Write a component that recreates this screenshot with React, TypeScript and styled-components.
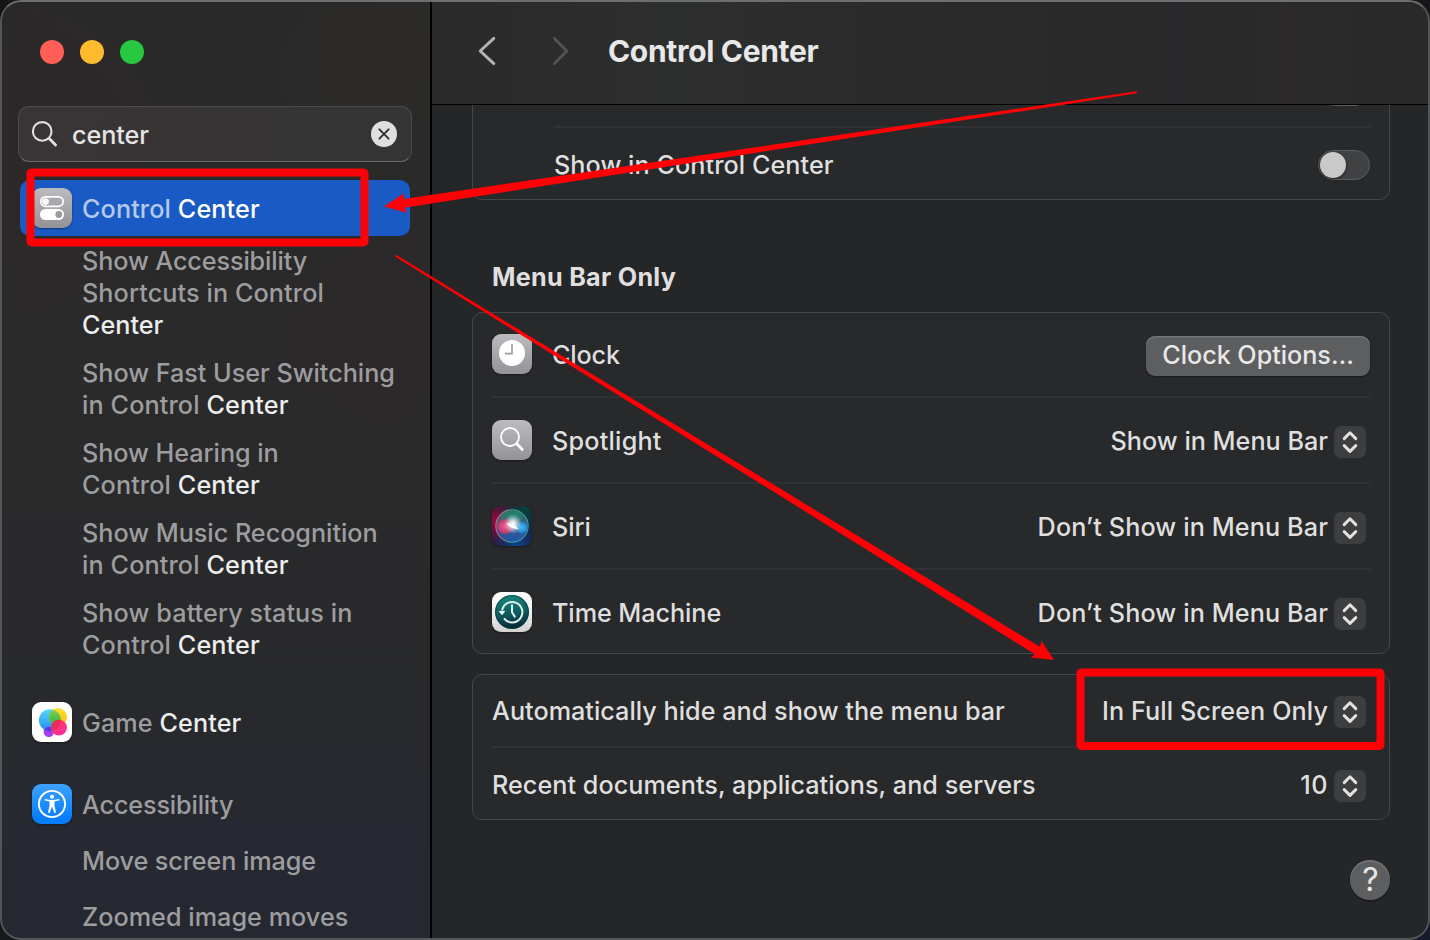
import React from "react";
import styled, { createGlobalStyle } from "styled-components";

const GlobalStyle = createGlobalStyle`
  *, *::before, *::after { box-sizing: border-box; }
  html, body { margin: 0; padding: 0; overflow: hidden; background: #131415; }
  body { font-family: Inter, "Liberation Sans", sans-serif; font-size: 25.2px; font-weight: 450; -webkit-font-smoothing: antialiased; }
  svg { display: block; flex: none; }
`;

/* ---------- window ---------- */

const Desktop = styled.div`
  position: relative;
  width: 1430px;
  height: 940px;
  overflow: hidden;
  background: linear-gradient(160deg, #151515 0%, #17181b 60%, #171a2a 100%);
`;

const Window = styled.div`
  position: relative;
  display: flex;
  width: 1430px;
  height: 940px;
  border-radius: 21px;
  overflow: hidden;
  background: #252628;
  &::after {
    content: "";
    position: absolute;
    inset: 0;
    border: 2px solid #545556;
    border-top-color: #6d6e6f;
    border-radius: 21px;
    pointer-events: none;
  }
`;

const Label = styled.span<{ $track?: number }>`
  letter-spacing: ${(p) => p.$track ?? 0.08}px;
  white-space: pre;
`;

/* ---------- sidebar ---------- */

const Sidebar = styled.aside`
  display: flex;
  flex-direction: column;
  flex: none;
  width: 432px;
  border-right: 2px solid #000;
  overflow: hidden;
  color: #9d9d9f;
  background:
    radial-gradient(circle at 100% 6%, rgba(46, 43, 38, 0.8), transparent 190px),
    radial-gradient(circle at 90% 36%, rgba(50, 38, 38, 0.45), transparent 150px),
    radial-gradient(circle at 0% 17%, rgba(50, 38, 38, 0.5), transparent 230px),
    linear-gradient(180deg, #29292a 0%, #2a2a2b 40%, #28292b 72%, #262932 90%, #262831 100%);
`;

const TrafficLights = styled.div`
  display: flex;
  gap: 16px;
  padding: 40px 0 0 40px;
  height: 106px;
  flex: none;
`;

const Light = styled.i<{ $color: string }>`
  width: 24px;
  height: 24px;
  border-radius: 50%;
  background: ${(p) => p.$color};
`;

const SearchField = styled.div`
  display: flex;
  align-items: center;
  flex: none;
  height: 56px;
  margin: 0 18px;
  padding: 0 14px 0 12px;
  border: 1px solid #4c4a4b;
  border-bottom: 1.5px solid #68676a;
  border-radius: 11px;
  background: linear-gradient(100deg, #3a3435 0%, #373435 50%, #333435 100%);
  color: #e4e4e4;
`;

const SearchText = styled.div`
  flex: 1;
  padding: 2px 0 0 13px;
  line-height: 32px;
`;

const Entry = styled.div<{ $selected?: boolean }>`
  display: flex;
  align-items: center;
  flex: none;
  gap: 10px;
  height: 56px;
  margin: 0 20px;
  padding-left: 12px;
  border-radius: 10px;
  background: ${(p) => (p.$selected ? "#195ac4" : "transparent")};
  color: ${(p) => (p.$selected ? "#b4c9ec" : "inherit")};
`;

const EntryText = styled.div`
  padding-top: 2px;
  line-height: 32px;
`;

const Results = styled.div`
  display: flex;
  flex-direction: column;
  flex: none;
  gap: 26px;
  padding-top: 18px;
`;

const SubList = styled.div`
  display: flex;
  flex-direction: column;
  gap: 16px;
  padding: 9px 0 7px 82px;
`;

const SubItem = styled.div`
  display: flex;
  flex-direction: column;
  line-height: 32px;
`;

const SubRow = styled.div`
  height: 56px;
  padding: 13px 0 0 82px;
  line-height: 32px;
`;

const Match = styled.b<{ $selected?: boolean }>`
  font-weight: inherit;
  color: ${(p) => (p.$selected ? "#ffffff" : "#ededed")};
`;

/* ---------- content pane ---------- */

const Pane = styled.main`
  display: flex;
  flex-direction: column;
  flex: 1;
  min-width: 0;
  color: #dfdfdf;
`;

const Header = styled.header`
  display: flex;
  align-items: center;
  flex: none;
  height: 105px;
  padding: 0 0 2px 45px;
  border-bottom: 1px solid #000;
  background: linear-gradient(90deg, #2a2a2b 0%, #2d2e2e 25%, #2a2a2b 50%, #29282a 75%, #2b2a29 85%, #2a2929 100%);
`;

const Title = styled.h1`
  margin: 0 0 0 37px;
  font-size: 30px;
  font-weight: 700;
  line-height: 36px;
  letter-spacing: -0.32px;
  color: #e8e8e8;
`;

const NavIcon = styled.span<{ $gap?: number }>`
  margin-left: ${(p) => p.$gap ?? 0}px;
`;

const Scroll = styled.div`
  display: flex;
  flex-direction: column;
  flex: 1;
  min-height: 0;
  padding: 0 40px;
  overflow: hidden;
`;

const Card = styled.section<{ $clipped?: boolean }>`
  flex: none;
  margin-top: ${(p) => (p.$clipped ? "-53px" : "0")};
  padding: 0 19px;
  border: 1px solid #454648;
  border-radius: 10px;
  background: #28292b;
`;

const CardStack = styled.div`
  display: flex;
  flex-direction: column;
  gap: 20px;
`;

const SectionTitle = styled.h2`
  margin: 0;
  height: 112px;
  padding: 61px 0 0 20px;
  font-size: 25.2px;
  font-weight: 700;
  line-height: 32px;
  letter-spacing: 0.27px;
`;

const Row = styled.div<{ $height: number; $indent?: number; $drop?: number; $lift?: number }>`
  display: flex;
  align-items: center;
  height: ${(p) => p.$height}px;
  margin-left: ${(p) => p.$indent ?? 0}px;
  padding-top: ${(p) => p.$drop ?? 0}px;
  padding-bottom: ${(p) => p.$lift ?? 0}px;
`;

const Divider = styled.hr<{ $indent?: number }>`
  height: 2px;
  margin: 0 0 0 ${(p) => p.$indent ?? 0}px;
  border: 0;
  background: #313235;
`;

const RowText = styled.div<{ $gap?: number; $drop?: number }>`
  flex: 1;
  padding: ${(p) => p.$drop ?? 2}px 0 0 ${(p) => p.$gap ?? 0}px;
  line-height: 32px;
`;

const Value = styled.div`
  padding-top: 2px;
  line-height: 32px;
`;

const StepperBox = styled.span`
  display: flex;
  align-items: center;
  justify-content: center;
  width: 32px;
  height: 32px;
  margin: 4px 4px 0 6px;
  border-radius: 7px;
  background: #3d3e40;
`;

const PushButton = styled.button`
  width: 224px;
  height: 40px;
  margin-top: 4px;
  padding: 0 0 2px;
  border: 0;
  border-radius: 9px;
  background: #5d5e60;
  box-shadow: inset 0 1.5px 0 #737476, 0 1px 2px rgba(0, 0, 0, 0.45);
  font: inherit;
  color: #e8e8e8;
`;

const Switch = styled.span`
  display: flex;
  align-items: center;
  width: 52px;
  height: 30px;
  padding-left: 1px;
  border: 1px solid #5b5c5e;
  border-radius: 15px;
  background: #404143;
  &::before {
    content: "";
    width: 26px;
    height: 26px;
    border-radius: 50%;
    background: #c9c9c9;
    box-shadow: 0 1px 3px rgba(0, 0, 0, 0.5);
  }
`;

const Footer = styled.footer`
  display: flex;
  justify-content: flex-end;
  padding-top: 40px;
`;

const HelpButton = styled.button`
  width: 40px;
  height: 40px;
  padding: 0 0 0 1px;
  border: 0;
  border-radius: 50%;
  background: #5d5e60;
  box-shadow: inset 0 1.5px 1px #77787a, 0 1px 2px rgba(0, 0, 0, 0.45);
  font: 400 32px/40px Inter, sans-serif;
  color: #e6e6e6;
`;

/* ---------- icons ---------- */

const Tile = styled.span<{ $fill: string }>`
  display: flex;
  flex: none;
  width: 40px;
  height: 40px;
  border-radius: 9px;
  overflow: hidden;
  background: ${(p) => p.$fill};
  box-shadow: 0 1px 2px rgba(0, 0, 0, 0.4);
`;

const GREY = "linear-gradient(180deg, #bcbbc0 0%, #939297 100%)";

const ControlCenterIcon = () => (
  <Tile $fill={GREY}>
    <svg width="40" height="40" viewBox="0 0 40 40">
      <rect x="8.8" y="8.8" width="22.4" height="9.6" rx="4.8" fill="#a9a8ac" stroke="#fff" strokeWidth="1.7" />
      <circle cx="13.6" cy="13.6" r="3.3" fill="#fff" />
      <rect x="8" y="21" width="24" height="11" rx="5.5" fill="#fff" />
      <circle cx="26.8" cy="26.5" r="3.4" fill="#9c9b9f" />
    </svg>
  </Tile>
);

const ClockIcon = () => (
  <Tile $fill={GREY}>
    <svg width="40" height="40" viewBox="0 0 40 40">
      <circle cx="20" cy="19" r="13" fill="#fff" />
      <path d="M20 10.3V19.6H13" fill="none" stroke="#9d9ca1" strokeWidth="1.7" />
    </svg>
  </Tile>
);

const SpotlightIcon = () => (
  <Tile $fill={GREY}>
    <svg width="40" height="40" viewBox="0 0 40 40" fill="none" stroke="#fff" strokeLinecap="round">
      <circle cx="18" cy="17" r="9" strokeWidth="1.8" />
      <path d="M24.8 23.8L30.3 29.5" strokeWidth="2.8" />
    </svg>
  </Tile>
);

const SiriIcon = () => (
  <Tile $fill="#201c3c">
    <svg width="40" height="40" viewBox="0 0 40 40">
      <defs>
        <radialGradient id="siriRed" cx="0" cy="0.35" r="0.75"><stop offset="0" stopColor="#960a40" /><stop offset="1" stopColor="#720b3a" stopOpacity="0" /></radialGradient>
        <radialGradient id="siriGreen" cx="0.85" cy="0.05" r="0.7"><stop offset="0" stopColor="#06443a" /><stop offset="1" stopColor="#06443a" stopOpacity="0" /></radialGradient>
        <radialGradient id="siriBlue" cx="0.6" cy="1" r="0.65"><stop offset="0" stopColor="#0b4592" /><stop offset="1" stopColor="#0a3d7a" stopOpacity="0" /></radialGradient>
        <linearGradient id="siriOrb" x1="0" y1="0" x2="0" y2="1"><stop offset="0" stopColor="#1d7d66" /><stop offset="0.5" stopColor="#4f6292" /><stop offset="1" stopColor="#1d5dbc" /></linearGradient>
        <linearGradient id="siriRing" x1="0" y1="0.4" x2="1" y2="0.5"><stop offset="0" stopColor="#e0587c" /><stop offset="0.5" stopColor="#4ea88e" /><stop offset="1" stopColor="#3496ad" /></linearGradient>
        <radialGradient id="siriPink"><stop offset="0" stopColor="#f35c98" /><stop offset="0.75" stopColor="#d83a6c" stopOpacity="0.85" /><stop offset="1" stopColor="#c12c6a" stopOpacity="0" /></radialGradient>
        <radialGradient id="siriCyan"><stop offset="0" stopColor="#43bdf5" /><stop offset="0.7" stopColor="#269be0" stopOpacity="0.75" /><stop offset="1" stopColor="#1d7ccc" stopOpacity="0" /></radialGradient>
        <radialGradient id="siriGlow"><stop offset="0" stopColor="#fff" /><stop offset="0.3" stopColor="#fff" stopOpacity="0.8" /><stop offset="1" stopColor="#cfeaff" stopOpacity="0" /></radialGradient>
      </defs>
      <rect width="40" height="40" fill="url(#siriRed)" />
      <rect width="40" height="40" fill="url(#siriGreen)" />
      <rect width="40" height="40" fill="url(#siriBlue)" />
      <circle cx="20" cy="20" r="16" fill="url(#siriOrb)" fillOpacity="0.8" />
      <ellipse cx="20" cy="11" rx="11" ry="6" fill="#239877" fillOpacity="0.4" />
      <circle cx="13" cy="20.5" r="8.5" fill="url(#siriPink)" />
      <circle cx="29.8" cy="21.5" r="6.8" fill="url(#siriCyan)" />
      <circle cx="20" cy="20" r="16.2" fill="none" stroke="url(#siriRing)" strokeWidth="1.1" />
      <ellipse cx="21" cy="18" rx="9" ry="10" fill="url(#siriGlow)" />
      <path d="M14.5 17.5Q21 16.5 26.5 23Q18.5 22.8 14.5 17.5Z" fill="#fff" />
    </svg>
  </Tile>
);

const TimeMachineIcon = () => (
  <Tile $fill="linear-gradient(180deg, #ffffff 0%, #ececec 55%, #d2d2d2 100%)">
    <svg width="40" height="40" viewBox="0 0 40 40">
      <defs>
        <linearGradient id="tmDial" x1="0.4" y1="0" x2="0.55" y2="1"><stop offset="0" stopColor="#17897c" /><stop offset="0.5" stopColor="#0e5f60" /><stop offset="1" stopColor="#062531" /></linearGradient>
      </defs>
      <circle cx="20" cy="20" r="17" fill="url(#tmDial)" />
      <circle cx="20" cy="20" r="16.3" fill="none" stroke="#0a3c42" strokeOpacity="0.6" strokeWidth="1.2" />
      <path d="M10.1 18.5A10.2 10.2 0 1 1 12 26.3" fill="none" stroke="#dff0ee" strokeWidth="2" />
      <path d="M6.6 19H13.4L10 23.2Z" fill="#eef8f6" />
      <path d="M20 13.2V20.2L22.8 24.6" fill="none" stroke="#e6f3f1" strokeWidth="2" strokeLinecap="round" strokeLinejoin="round" />
    </svg>
  </Tile>
);

const GameCenterIcon = () => (
  <Tile $fill="#ffffff">
    <svg width="40" height="40" viewBox="0 0 40 40">
      <defs>
        <linearGradient id="gcBlue" x1="0" y1="0" x2="0" y2="1"><stop offset="0" stopColor="#4fdcf8" /><stop offset="1" stopColor="#2c82f5" /></linearGradient>
        <linearGradient id="gcYellow" x1="0" y1="0" x2="0" y2="1"><stop offset="0" stopColor="#fbe22d" /><stop offset="1" stopColor="#ffb812" /></linearGradient>
        <linearGradient id="gcRed" x1="0" y1="0" x2="0.6" y2="1"><stop offset="0" stopColor="#ff3b42" /><stop offset="1" stopColor="#fb2fa2" /></linearGradient>
        <linearGradient id="gcGreen" x1="0" y1="0" x2="0" y2="1"><stop offset="0" stopColor="#8bd44c" /><stop offset="1" stopColor="#25b04c" /></linearGradient>
        <clipPath id="gcBlueClip"><circle cx="17.9" cy="18.3" r="11" /></clipPath>
      </defs>
      <circle cx="16.8" cy="29.8" r="5.2" fill="#a63df0" />
      <circle cx="17.9" cy="18.3" r="11" fill="url(#gcBlue)" />
      <path d="M12.2 27.5Q16.8 31 21 28.8V26Q15 23 12.2 27.5Z" fill="#5a3fe0" />
      <circle cx="26" cy="15" r="9" fill="url(#gcYellow)" />
      <circle cx="26" cy="15" r="9" fill="url(#gcGreen)" clipPath="url(#gcBlueClip)" />
      <circle cx="27" cy="25.7" r="7.9" fill="url(#gcRed)" />
      <path d="M19.8 22.6A7.9 7.9 0 0 1 28.4 18A11 11 0 0 1 21 28.8A7.9 7.9 0 0 1 19.8 22.6Z" fill="#dc2b50" fillOpacity="0.65" />
    </svg>
  </Tile>
);

const AccessibilityIcon = () => (
  <Tile $fill="linear-gradient(180deg, #3da2fd 0%, #087dfd 85%)">
    <svg width="40" height="40" viewBox="0 0 40 40" fill="none" stroke="#fff">
      <circle cx="20" cy="20" r="13.1" strokeWidth="1.9" />
      <circle cx="20" cy="12.8" r="2" fill="#fff" stroke="none" />
      <path d="M13.4 15.7Q20 17.9 26.6 15.7" strokeWidth="1.5" strokeLinecap="round" />
      <path d="M17.7 16.5H22.3L22.2 21.2L23.8 28.6L22.6 28.9L20.3 22.8H19.7L17.4 28.9L16.2 28.6L17.8 21.2Z" fill="#fff" stroke="#fff" strokeWidth="0.4" strokeLinejoin="round" />
    </svg>
  </Tile>
);

const SearchIcon = () => (
  <svg width="28" height="28" viewBox="0 0 28 28" fill="none" stroke="#e0e0e0" strokeLinecap="round">
    <circle cx="11.2" cy="11.4" r="9.3" strokeWidth="2.1" />
    <path d="M18.2 18.5L24.6 25" strokeWidth="2.8" />
  </svg>
);

const ClearIcon = () => (
  <svg width="26" height="26" viewBox="0 0 26 26">
    <circle cx="13" cy="13" r="13" fill="#e0e0e0" />
    <path d="M8.4 8.4L17.6 17.6M17.6 8.4L8.4 17.6" stroke="#363435" strokeWidth="2" strokeLinecap="round" />
  </svg>
);

const Chevron = ({ forward }: { forward?: boolean }) => (
  <svg width="20" height="32" viewBox="0 0 20 32" fill="none" strokeWidth="2.9" strokeLinecap="round" strokeLinejoin="round">
    {forward ? <path d="M3.4 3.4L15.8 16L3.4 28.6" stroke="#525354" /> : <path d="M16.8 3.4L3.2 16L16.8 28.6" stroke="#b4b4b4" />}
  </svg>
);

const Stepper = () => (
  <StepperBox>
    <svg width="32" height="32" viewBox="0 0 32 32" fill="none" stroke="#e2e2e2" strokeWidth="2.9" strokeLinecap="round" strokeLinejoin="round">
      <path d="M10.2 12.6L16 6.8L21.8 12.6M10.2 19.6L16 25.4L21.8 19.6" />
    </svg>
  </StepperBox>
);

/* ---------- annotations over the window ---------- */

const Overlay = styled.svg`
  position: absolute;
  inset: 0;
  pointer-events: none;
`;

const Annotations = () => (
  <Overlay width="1430" height="940" viewBox="0 0 1430 940" fill="#ff0006">
    <rect x="30.5" y="172.5" width="334" height="70" rx="1" fill="none" stroke="#ff0006" strokeWidth="8" strokeLinejoin="round" />
    <rect x="1080.5" y="672.5" width="300" height="73.5" rx="1" fill="none" stroke="#ff0006" strokeWidth="8" strokeLinejoin="round" />
    <path d="M384 206.5L404 193.3L403.3 199L1136.5 91.2L1137 93.2L404.5 207.8L406.8 212.8Z" />
    <path d="M1054 660L1041.5 640.8L1040 646.8L396 254.8L395 256.4L1034.8 654.2L1030.6 657.6Z" />
  </Overlay>
);

/* ---------- data ---------- */

type Line = { text: string; match?: string; track?: number };

const SUB_RESULTS: Line[][] = [
  [{ text: "Show Accessibility", track: -0.1 }, { text: "Shortcuts in Control", track: 0.1 }, { text: "", match: "Center", track: 0 }],
  [{ text: "Show Fast User Switching", track: -0.02 }, { text: "in Control ", match: "Center", track: 0.12 }],
  [{ text: "Show Hearing in", track: -0.04 }, { text: "Control ", match: "Center", track: 0.11 }],
  [{ text: "Show Music Recognition", track: -0.02 }, { text: "in Control ", match: "Center", track: 0.12 }],
  [{ text: "Show battery status in", track: 0.1 }, { text: "Control ", match: "Center", track: 0.11 }],
];

const MODULES = [
  { name: "Spotlight", icon: <SpotlightIcon />, value: "Show in Menu Bar", height: 84, track: 0.22, valueTrack: 0 },
  { name: "Siri", icon: <SiriIcon />, value: "Don’t Show in Menu Bar", height: 84, track: -0.05, valueTrack: 0.11 },
  { name: "Time Machine", icon: <TimeMachineIcon />, value: "Don’t Show in Menu Bar", height: 83, track: -0.07, valueTrack: 0.11 },
];

export default function App() {
  return (
    <Desktop>
      <GlobalStyle />
      <Window>
        <Sidebar>
          <TrafficLights>
            <Light $color="#ff5f57" />
            <Light $color="#febb2e" />
            <Light $color="#28c840" />
          </TrafficLights>
          <SearchField>
            <SearchIcon />
            <SearchText><Label $track={-0.05}>center</Label></SearchText>
            <ClearIcon />
          </SearchField>
          <Results>
            <div>
              <Entry $selected>
                <ControlCenterIcon />
                <EntryText><Label $track={0.11}>Control <Match $selected>Center</Match></Label></EntryText>
              </Entry>
              <SubList>
                {SUB_RESULTS.map((lines, i) => (
                  <SubItem key={i}>
                    {lines.map((line, j) => (
                      <Label key={j} $track={line.track}>
                        {line.text}
                        {line.match && <Match>{line.match}</Match>}
                      </Label>
                    ))}
                  </SubItem>
                ))}
              </SubList>
            </div>
            <Entry>
              <GameCenterIcon />
              <EntryText><Label $track={0.1}>Game <Match>Center</Match></Label></EntryText>
            </Entry>
            <div>
              <Entry>
                <AccessibilityIcon />
                <EntryText><Label $track={-0.14}>Accessibility</Label></EntryText>
              </Entry>
              <SubRow><Label $track={-0.09}>Move screen image</Label></SubRow>
              <SubRow><Label $track={0.04}>Zoomed image moves</Label></SubRow>
            </div>
          </Results>
        </Sidebar>

        <Pane>
          <Header>
            <NavIcon><Chevron /></NavIcon>
            <NavIcon $gap={54}><Chevron forward /></NavIcon>
            <Title>Control Center</Title>
          </Header>
          <Scroll>
            <Card $clipped>
              <Row $height={73} $indent={62} $drop={2}>
                <RowText />
                <Switch />
              </Row>
              <Divider $indent={62} />
              <Row $height={71} $indent={62} $drop={3}>
                <RowText $drop={0}><Label $track={0.06}>Show in Control Center</Label></RowText>
                <Switch />
              </Row>
            </Card>

            <SectionTitle>Menu Bar Only</SectionTitle>
            <CardStack>
              <Card>
                <Row $height={83} $lift={1}>
                  <ClockIcon />
                  <RowText $gap={20}><Label $track={-0.15}>Clock</Label></RowText>
                  <PushButton><Label $track={-0.03}>Clock Options…</Label></PushButton>
                </Row>
                {MODULES.map((m) => (
                  <React.Fragment key={m.name}>
                    <Divider />
                    <Row $height={m.height}>
                      {m.icon}
                      <RowText $gap={20}><Label $track={m.track}>{m.name}</Label></RowText>
                      <Value><Label $track={m.valueTrack}>{m.value}</Label></Value>
                      <Stepper />
                    </Row>
                  </React.Fragment>
                ))}
              </Card>
              <Card>
                <Row $height={71} $lift={1}>
                  <RowText><Label $track={0.02}>Automatically hide and show the menu bar</Label></RowText>
                  <Value><Label $track={0.09}>In Full Screen Only</Label></Value>
                  <Stepper />
                </Row>
                <Divider />
                <Row $height={71} $drop={1}>
                  <RowText><Label $track={0.04}>Recent documents, applications, and servers</Label></RowText>
                  <Value><Label $track={0.5}>10</Label></Value>
                  <Stepper />
                </Row>
              </Card>
            </CardStack>
            <Footer>
              <HelpButton>?</HelpButton>
            </Footer>
          </Scroll>
        </Pane>
      </Window>
      <Annotations />
    </Desktop>
  );
}
